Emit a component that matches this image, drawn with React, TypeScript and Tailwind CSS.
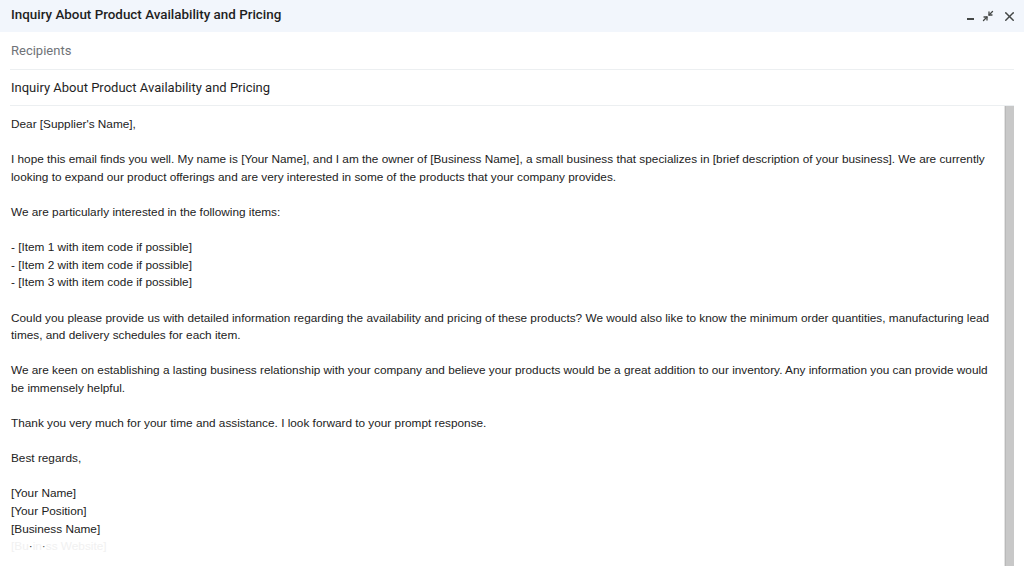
import { Minimize2, X } from "lucide-react";

const paragraphs: string[][] = [
  ["Dear [Supplier's Name],"],
  [
    "I hope this email finds you well. My name is [Your Name], and I am the owner of [Business Name], a small business that specializes in [brief description of your business]. We are currently looking to expand our product offerings and are very interested in some of the products that your company provides.",
  ],
  ["We are particularly interested in the following items:"],
  [
    "- [Item 1 with item code if possible]",
    "- [Item 2 with item code if possible]",
    "- [Item 3 with item code if possible]",
  ],
  [
    "Could you please provide us with detailed information regarding the availability and pricing of these products? We would also like to know the minimum order quantities, manufacturing lead times, and delivery schedules for each item.",
  ],
  [
    "We are keen on establishing a lasting business relationship with your company and believe your products would be a great addition to our inventory. Any information you can provide would be immensely helpful.",
  ],
  ["Thank you very much for your time and assistance. I look forward to your prompt response."],
  ["Best regards,"],
  ["[Your Name]", "[Your Position]", "[Business Name]"],
];

const App = () => {
  return (
    <div className="w-[1024px] h-[566px] overflow-hidden bg-white flex flex-col font-['Roboto',sans-serif]">
      {/* title bar */}
      <div className="h-[32px] shrink-0 bg-[#f2f6fc] flex items-center justify-between pl-[11px] pr-[7px]">
        <span className="text-[13.4px] font-medium text-[#1f1f1f] -mt-[2px]">
          Inquiry About Product Availability and Pricing
        </span>
        <div className="flex items-center gap-[8px] text-[#444746]">
          <span className="w-[7px] h-[2px] bg-[#444746] mt-[6px]" />
          <Minimize2 className="h-[12px] w-[12px]" strokeWidth={2.6} />
          <X className="h-[15px] w-[15px]" strokeWidth={2.4} />
        </div>
      </div>

      {/* recipients */}
      <div className="mx-[10px] h-[38px] shrink-0 flex items-center border-b border-[#eceff1]">
        <span className="pl-[1px] text-[13px] text-[#6f7378]">Recipients</span>
      </div>

      {/* subject */}
      <div className="mx-[10px] h-[36px] shrink-0 flex items-center border-b border-[#eceff1]">
        <span className="pl-[1px] text-[13px] text-[#1f1f1f]">
          Inquiry About Product Availability and Pricing
        </span>
      </div>

      {/* body */}
      <div className="flex-1 flex min-h-0">
        <div className="flex-1 pl-[11px] pr-[14px] pt-[10px] font-['Liberation_Sans',Arial,sans-serif] text-[11.8px] leading-[17.6px] text-[#222]">
          {paragraphs.map((lines, i) => (
            <div key={i} className="mb-[17.6px]">
              {lines.map((line) => (
                <div key={line}>{line}</div>
              ))}
              {i === paragraphs.length - 1 && (
                <div className="text-[#f1f1f1] select-none">
                  [Bu<span className="text-[#333]">·</span>in<span className="text-[#555]">·</span>ss Website]
                </div>
              )}
            </div>
          ))}
        </div>
        <div className="w-[20px] shrink-0 flex">
          <div className="w-[1px] bg-[#e3e3e3]" />
          <div className="w-[9px] bg-[#c8c8c8] border-l border-[#b9b9b9]" />
        </div>
      </div>
    </div>
  );
};

export default App;
